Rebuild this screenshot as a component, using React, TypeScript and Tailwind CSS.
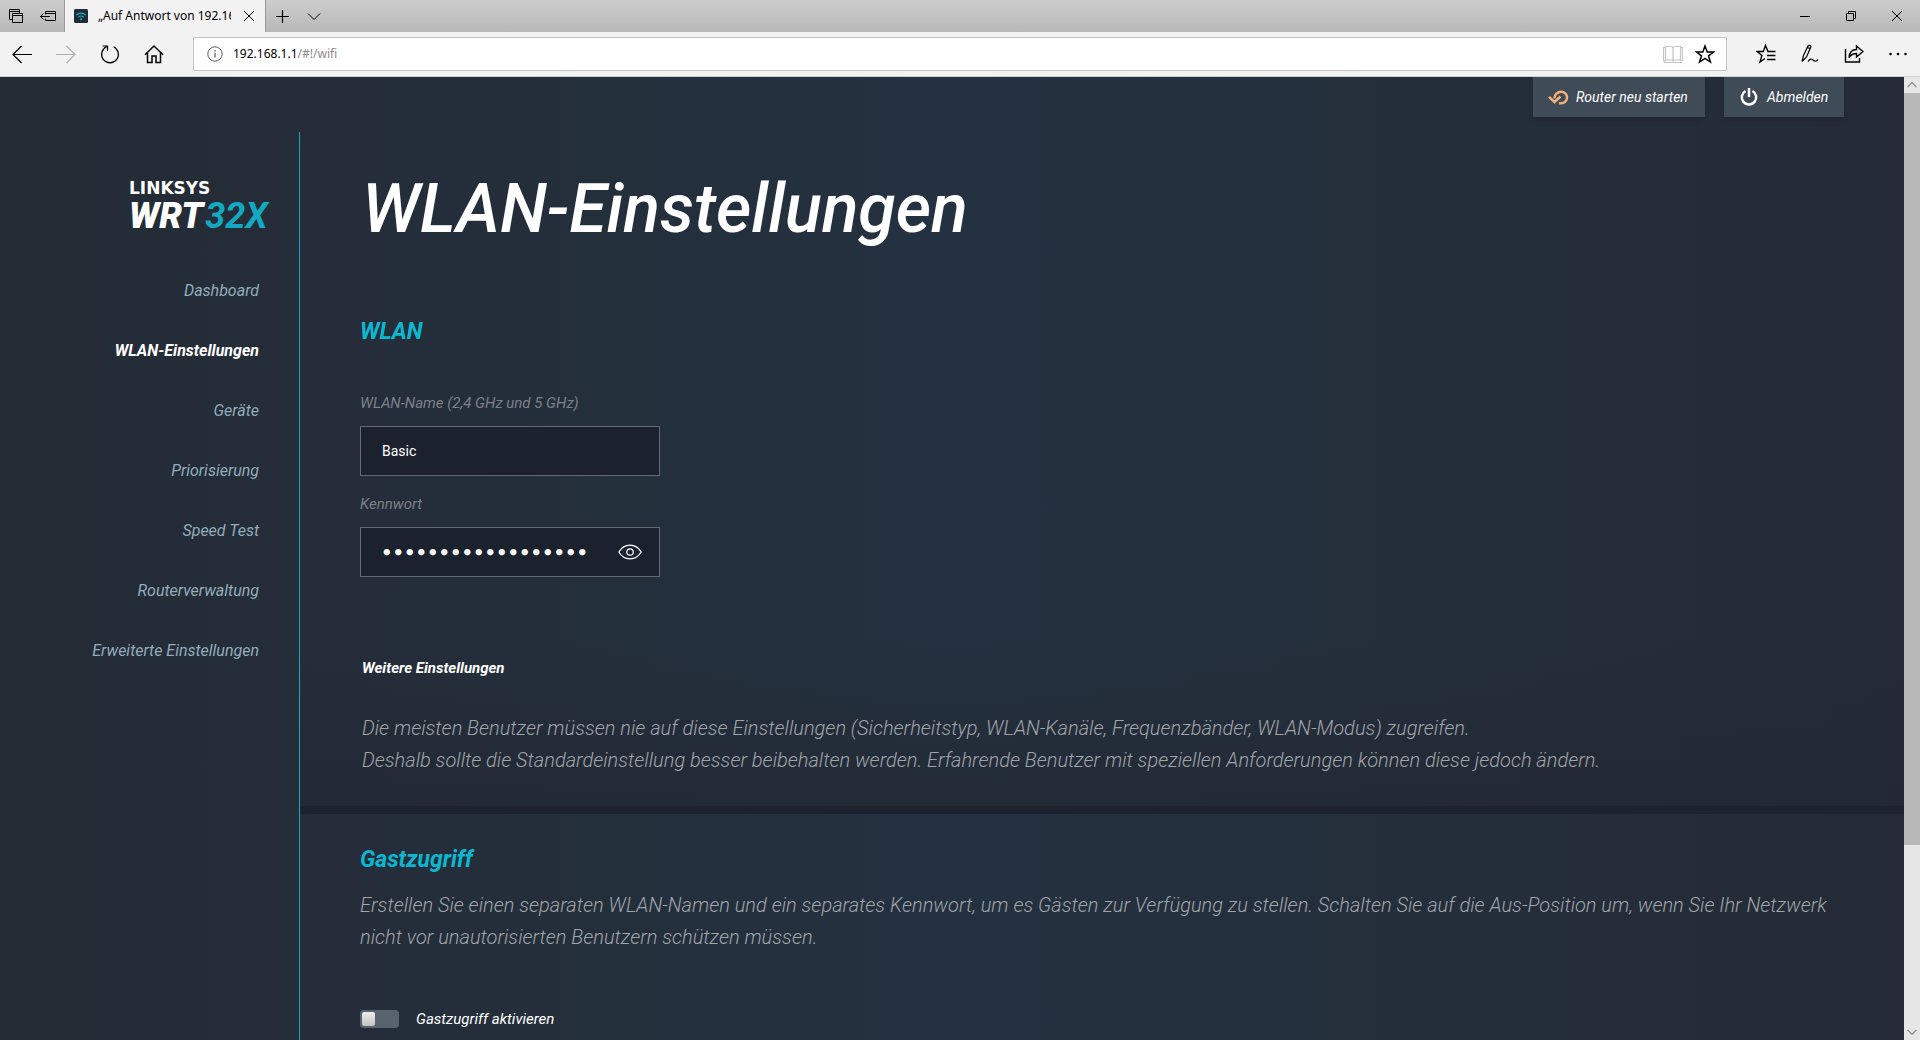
import { useState } from "react"
import type { ReactNode } from "react"

const navItems = [
  { label: "Dashboard", active: false },
  { label: "WLAN-Einstellungen", active: true },
  { label: "Geräte", active: false },
  { label: "Priorisierung", active: false },
  { label: "Speed Test", active: false },
  { label: "Routerverwaltung", active: false },
  { label: "Erweiterte Einstellungen", active: false },
]

interface IconProps {
  className?: string
  children: ReactNode
}

function Icon({ className = "size-5", children }: IconProps) {
  return (
    <svg
      viewBox="0 0 20 20"
      className={className}
      fill="none"
      stroke="currentColor"
      strokeWidth="1.2"
      aria-hidden="true"
    >
      {children}
    </svg>
  )
}

function TabBar() {
  return (
    <div className="flex h-8 items-stretch justify-between bg-linear-to-b from-[#cdcdcd] to-[#b8b8b8] text-black">
      <div className="flex items-stretch">
        <div className="flex w-16 items-center gap-3 pl-1.5">
          <button aria-label="Tabs anzeigen">
            <Icon>
              <path d="M6.5 7.5h10v9h-10zM6.5 9.5h10M6.5 13.5h-3v-10h10v4M3.5 5.5h10" strokeWidth="1" />
            </Icon>
          </button>
          <button aria-label="Tabs beiseitelegen">
            <Icon>
              <path d="M7.5 8.5v-3h10v9h-10v-2M7.5 7.5h10M2.5 10.5H12M5.5 7.5l-3 3 3 3" strokeWidth="1" />
            </Icon>
          </button>
        </div>
        <div className="flex w-[202px] items-center border-x border-[#999] bg-[#f2f2f2] pl-[9px]">
          <svg viewBox="0 0 14 14" className="size-3.5 shrink-0" aria-hidden="true">
            <rect width="14" height="14" rx="1.5" fill="#222b38" />
            <g fill="none" stroke="#12b5cb" strokeWidth="1.2">
              <path d="M2.3 6c2.6-2.6 6.8-2.6 9.4 0M4.3 8.2c1.5-1.5 3.9-1.5 5.4 0" />
            </g>
            <circle cx="7" cy="10.3" r="1" fill="#12b5cb" />
          </svg>
          <span className="mr-0.5 ml-2.5 w-[133px] overflow-hidden text-[12px] whitespace-nowrap">
            „Auf Antwort von 192.168.1.1 wird gewartet“
          </span>
          <button aria-label="Tab schließen" className="ml-1.5">
            <Icon>
              <path d="M5 5l10 10M15 5L5 15" strokeWidth="1" />
            </Icon>
          </button>
        </div>
        <div className="flex items-center gap-3 pl-1.5">
          <button aria-label="Neuer Tab">
            <Icon>
              <path d="M10.5 4v13M4 10.5h13" />
            </Icon>
          </button>
          <button aria-label="Tabvorschau">
            <Icon>
              <path d="M4 7.5l6 6 6-6" strokeWidth="1" />
            </Icon>
          </button>
        </div>
      </div>
      <div className="flex items-center gap-[26px] pr-[13px]">
        <button aria-label="Minimieren">
          <Icon>
            <path d="M5 10.5h10" strokeWidth="1" />
          </Icon>
        </button>
        <button aria-label="Verkleinern">
          <Icon>
            <path d="M5.5 7.5h7v7h-7zM7.5 7.5v-2h7v7h-2" strokeWidth="1" />
          </Icon>
        </button>
        <button aria-label="Schließen">
          <Icon>
            <path d="M5 5l10 10M15 5L5 15" strokeWidth="1" />
          </Icon>
        </button>
      </div>
    </div>
  )
}

function Toolbar() {
  return (
    <div className="flex h-[45px] items-center border-b border-[#d0d0d0] bg-[#f2f2f2] text-black">
      <div className="flex w-[193px] items-center gap-6 pl-3">
        <button aria-label="Zurück">
          <Icon>
            <path d="M1 10.5h19M9.5 2L1 10.5 9.5 19" />
          </Icon>
        </button>
        <button aria-label="Vorwärts" className="text-[#b0b0b0]">
          <Icon>
            <path d="M0 10.5h19M10.5 2l8.5 8.5-8.5 8.5" />
          </Icon>
        </button>
        <button aria-label="Aktualisieren">
          <Icon>
            <path d="M6.5 2.8a8.4 8.4 0 1 0 7 0M2.5 2h5v5" />
          </Icon>
        </button>
        <button aria-label="Startseite">
          <Icon>
            <path d="M1 10.8L10 2l9 8.8M3.5 9v9.5H8V12h4v6.5h4.5V9" strokeWidth="1.5" />
          </Icon>
        </button>
      </div>
      <div className="flex h-[34px] flex-1 items-center border border-[#c4c4c4] bg-white pr-[11px] pl-[13px]">
        <Icon className="size-4 text-[#555]">
          <circle cx="10" cy="10" r="9" />
          <path d="M10 8.5v6M10 5v2" strokeWidth="1.5" />
        </Icon>
        <span className="ml-2.5 flex-1 text-[12px]">
          192.168.1.1<span className="text-[#8a8a8a]">/#!/wifi</span>
        </span>
        <button aria-label="Leseansicht" className="text-[#c4c4c4]">
          <Icon>
            <path d="M.5 3.5h2V17h-2zM2.5 2.5H8c1.5 0 2 1 2 2v13c0-1-.5-1.5-2-1.5H2.5zM17.5 2.5H12c-1.5 0-2 1-2 2v13c0-1 .5-1.5 2-1.5h5.5zM17.5 3.5h2V17h-2M1 18.5h18" />
          </Icon>
        </button>
        <button aria-label="Zu Favoriten hinzufügen" className="ml-3">
          <Icon>
            <path d="M10 2l2.2 6h6.3l-5 3.8 1.9 6.2L10 14.3 4.6 18l1.9-6.2-5-3.8h6.3z" strokeWidth="1.5" />
          </Icon>
        </button>
      </div>
      <div className="flex items-center gap-6 pr-3 pl-[29px]">
        <button aria-label="Hub">
          <Icon>
            <path
              d="M19.5 7.5H12L9.5 1.5 7.3 7.5H1.2l4.7 4L4 18l5-3.5M11 11.5h8.5M11 15.5h8.5"
              strokeWidth="1.4"
            />
          </Icon>
        </button>
        <button aria-label="Webseitennotiz erstellen">
          <Icon>
            <path d="M2 17.5l1.5-6L8 2c.6-1.2 3.3-.6 2.8 1L6.5 13 2 17.5M7.5 3.5l2.5 1M8 17.5c2-3 3.5-3 5-1.5s3.5 2 5-.5" />
          </Icon>
        </button>
        <button aria-label="Teilen">
          <Icon>
            <path
              d="M1.5 5v13h14v-4M12.5 2L19 7.5 12.5 13V9.5c-3.5 0-5.5 1-7.5 4 .5-5 3-8 7.5-8z"
              strokeWidth="1.4"
            />
          </Icon>
        </button>
        <button aria-label="Weitere Aktionen">
          <svg viewBox="0 0 20 20" className="size-5" fill="currentColor" aria-hidden="true">
            <circle cx="2.5" cy="10" r="1.3" />
            <circle cx="10" cy="10" r="1.3" />
            <circle cx="17.5" cy="10" r="1.3" />
          </svg>
        </button>
      </div>
    </div>
  )
}

function Scrollbar() {
  return (
    <div className="flex w-4 shrink-0 flex-col bg-[#e6e6e6] text-[#8a8a8a]">
      <Icon className="size-4">
        <path d="M4.5 12.5L10 7l5.5 5.5" strokeWidth="1.5" />
      </Icon>
      <div className="flex-[752] bg-[#b8b8b8]" />
      <div className="flex-[179]" />
      <Icon className="size-4">
        <path d="M4.5 7.5L10 13l5.5-5.5" strokeWidth="1.5" />
      </Icon>
    </div>
  )
}

function Sidebar() {
  return (
    <aside className="w-[299px] shrink-0 pr-10 text-right">
      <div className="mt-[46px] ml-[129px] text-left whitespace-nowrap">
        <div className="font-['DejaVu_Sans',sans-serif] text-[17px] leading-5 font-bold text-white">LINKSYS</div>
        <div className="flex gap-0.5 text-[36px] leading-9 font-black text-white italic">
          <span>WRT</span>
          <span className="font-bold text-[#12a9c2]">32X</span>
        </div>
      </div>
      <nav className="mt-[45px]">
        <ul className="flex flex-col gap-9">
          {navItems.map((item) => (
            <li key={item.label} className="text-[16px] leading-6 italic">
              <a href="#wifi" className={item.active ? "font-bold text-white" : "text-[#93acbc]"}>
                {item.label}
              </a>
            </li>
          ))}
        </ul>
      </nav>
    </aside>
  )
}

function WifiForm() {
  const [name, setName] = useState("Basic")
  const [password, setPassword] = useState("wrt32x-gaming-wlan")
  const [visible, setVisible] = useState(false)

  return (
    <form className="mt-[43px] w-[300px]">
      <label htmlFor="ssid" className="block text-[15px] leading-6 whitespace-nowrap text-[#7b8187] italic">
        WLAN-Name (2,4 GHz und 5 GHz)
      </label>
      <input
        id="ssid"
        value={name}
        onChange={(e) => setName(e.target.value)}
        className="mt-[11px] block h-[50px] w-full border border-[#646a6f] bg-[#1b222e] px-[21px] text-[14px] text-white outline-none"
      />
      <label htmlFor="password" className="mt-4 block text-[15px] leading-6 text-[#7b8187] italic">
        Kennwort
      </label>
      <div className="mt-[11px] flex h-[50px] items-center border border-[#646a6f] bg-[#1b222e] pr-[17px] pl-5">
        <input
          id="password"
          type={visible ? "text" : "password"}
          value={password}
          onChange={(e) => setPassword(e.target.value)}
          className="w-full min-w-0 flex-1 bg-transparent font-['DejaVu_Sans',sans-serif] text-[18px] font-bold text-white outline-none"
        />
        <button
          type="button"
          aria-label="Kennwort anzeigen"
          onClick={() => setVisible(!visible)}
          className="text-white"
        >
          <svg
            viewBox="0 0 24 16"
            className="h-4 w-6"
            fill="none"
            stroke="currentColor"
            strokeWidth="1.2"
            aria-hidden="true"
          >
            <path d="M.8 8C3.5 3.5 7.5 1.2 12 1.2S20.5 3.5 23.2 8c-2.7 4.5-6.7 6.8-11.2 6.8S3.5 12.5.8 8z" />
            <circle cx="12" cy="8" r="3.2" />
          </svg>
        </button>
      </div>
    </form>
  )
}

function GuestToggle() {
  const [enabled, setEnabled] = useState(false)

  return (
    <label className="mt-[54px] flex items-center gap-[17px] text-[15px] leading-6 text-white italic">
      <span className="flex">
        <input
          type="checkbox"
          checked={enabled}
          onChange={(e) => setEnabled(e.target.checked)}
          className="peer sr-only"
        />
        <span className="flex h-[18px] w-[39px] items-center rounded-sm bg-[#58636d] px-0.5 peer-checked:justify-end">
          <span className="h-3.5 w-[13px] rounded-xs bg-linear-to-b from-[#ececec] to-[#c4c4c4]" />
        </span>
      </span>
      Gastzugriff aktivieren
    </label>
  )
}

export default function App() {
  return (
    <div className="flex h-screen flex-col overflow-hidden font-[Roboto,sans-serif]">
      <header className="shrink-0 font-['Noto_Sans',sans-serif]">
        <TabBar />
        <Toolbar />
      </header>
      <div className="flex min-h-0 flex-1">
        <div className="flex min-w-0 flex-1 flex-col overflow-hidden bg-linear-to-r from-[#242b35] via-[#243140] to-[#242b36]">
          <div className="flex h-[55px] shrink-0 items-start justify-end gap-[19px] pr-[60px] text-[14px] text-white italic">
            <button className="flex h-10 w-[172px] items-center gap-[7px] bg-[#3f4b57] pl-[15px] shadow-md">
              <svg viewBox="0 0 21 15" className="h-[15px] w-[21px]" fill="none" stroke="#f2b07c" aria-hidden="true">
                <path d="M6.5 8.5C6.3 4.5 9.5 1.7 13.2 1.7a5.8 5.8 0 0 1 0 11.6H11" strokeWidth="2.5" />
                <path d="M1 6.8L6.5 12l6-5.5" strokeWidth="2.5" />
              </svg>
              Router neu starten
            </button>
            <button className="flex h-10 w-[120px] items-center gap-2 bg-[#3f4b57] pl-[15px] shadow-md">
              <svg viewBox="0 0 20 20" className="size-5" fill="none" stroke="currentColor" aria-hidden="true">
                <path d="M6.5 4a7.2 7.2 0 1 0 7 0M10 1v9" strokeWidth="2.5" />
              </svg>
              Abmelden
            </button>
          </div>
          <div className="flex min-h-0 flex-1">
            <Sidebar />
            <main className="min-w-0 flex-1 border-l border-[#12a9c2]">
              <section className="px-[60px] pt-[37px] pb-[59px]">
                <h1 className="pl-0.5 text-[68px] leading-20 font-medium text-white italic">WLAN-Einstellungen</h1>
                <h2 className="mt-[67px] text-[23px] leading-8 font-bold text-[#0bb8d0] italic">WLAN</h2>
                <WifiForm />
              </section>
              <section className="border-b-8 border-[#1c232e] bg-linear-to-b from-transparent to-[#222833]/70 px-[62px] pt-5 pb-[30px]">
                <button className="block text-[15px] leading-6 font-bold text-white italic">
                  Weitere Einstellungen
                </button>
                <p className="mt-8 text-[20px] leading-8 font-light text-[#a0a5a9] italic">
                  Die meisten Benutzer müssen nie auf diese Einstellungen (Sicherheitstyp, WLAN-Kanäle, Frequenzbänder,
                  WLAN-Modus) zugreifen.
                  <br />
                  Deshalb sollte die Standardeinstellung besser beibehalten werden. Erfahrende Benutzer mit speziellen
                  Anforderungen können diese jedoch ändern.
                </p>
              </section>
              <section className="pt-[30px] pr-10 pl-[60px]">
                <h2 className="text-[23px] leading-8 font-bold text-[#0bb8d0] italic">Gastzugriff</h2>
                <p className="mt-[13px] text-[20px] leading-8 font-light text-[#a0a5a9] italic">
                  Erstellen Sie einen separaten WLAN-Namen und ein separates Kennwort, um es Gästen zur Verfügung zu
                  stellen. Schalten Sie auf die Aus-Position um, wenn Sie Ihr Netzwerk nicht vor unautorisierten
                  Benutzern schützen müssen.
                </p>
                <GuestToggle />
              </section>
            </main>
          </div>
        </div>
        <Scrollbar />
      </div>
    </div>
  )
}
